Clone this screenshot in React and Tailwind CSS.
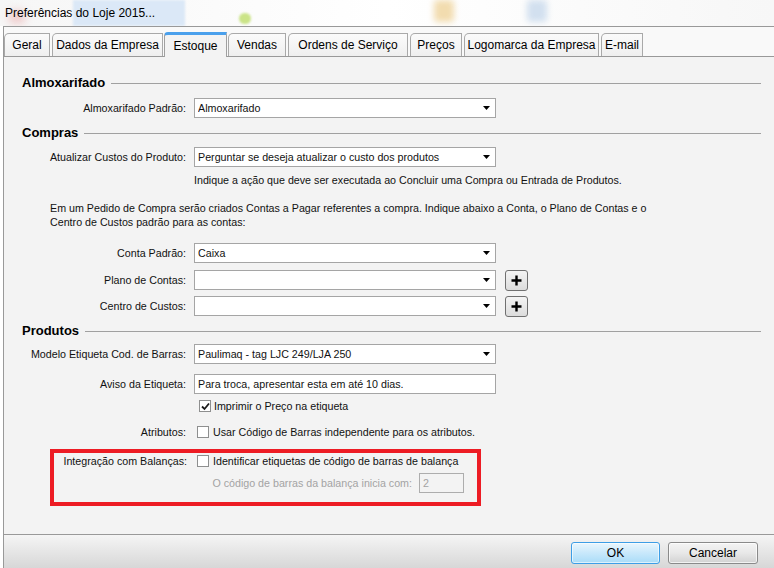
import React from 'react';

const tabs = [
  { label: 'Geral', w: 'w-[46px]' },
  { label: 'Dados da Empresa', w: 'w-[111px]' },
  { label: 'Estoque', w: 'w-[63px]', active: true },
  { label: 'Vendas', w: 'w-[58px]' },
  { label: 'Ordens de Serviço', w: 'w-[120px]' },
  { label: 'Preços', w: 'w-[52px]' },
  { label: 'Logomarca da Empresa', w: 'w-[135px]' },
  { label: 'E-mail', w: 'w-[42px]' },
];

function Arrow() {
  return (
    <svg width="7" height="4" viewBox="0 0 7 4" className="shrink-0">
      <path d="M0 0H7L3.5 4Z" fill="#000" />
    </svg>
  );
}

function Select({ value, w = 'w-[302px]' }) {
  return (
    <div className={`${w} h-[20px] bg-white border border-[#a5a5a5] flex items-center pl-[3px] pr-[5px]`}>
      <span className="flex-1 truncate">{value}</span>
      <Arrow />
    </div>
  );
}

function PlusButton() {
  return (
    <div className="ml-[9px] w-[23px] h-[21px] rounded-[3px] border border-[#707070] bg-gradient-to-b from-[#f4f4f4] to-[#dcdcdc] flex items-center justify-center">
      <svg width="11" height="11" viewBox="0 0 11 11">
        <path d="M5.5 0.5V10.5M0.5 5.5H10.5" stroke="#000" strokeWidth="2.4" />
      </svg>
    </div>
  );
}

function Checkbox({ checked }) {
  return (
    <div className="w-[12px] h-[12px] bg-white border border-[#8e8f8f] flex items-center justify-center shrink-0">
      {checked && (
        <svg width="9" height="9" viewBox="0 0 9 9">
          <path d="M1 4.5L3.5 7L8 1.5" stroke="#1a1a1a" strokeWidth="1.8" fill="none" />
        </svg>
      )}
    </div>
  );
}

function Row({ label, children, className = '' }) {
  return (
    <div className={`flex items-center ${className}`}>
      <span className="w-[183px] text-right pr-[1px]">{label}</span>
      <div className="ml-[7px] flex items-center">{children}</div>
    </div>
  );
}

function Section({ title, className = '' }) {
  return (
    <div className={`flex items-center h-[18px] pl-[18px] pr-[13px] ${className}`}>
      <span className="font-bold text-[13px] text-black">{title}</span>
      <div className="flex-1 ml-[6px] h-px bg-[#a0a0a0]" />
    </div>
  );
}

export default function App() {
  return (
    <div
      className="w-[774px] h-[568px] bg-white relative overflow-hidden text-[10.7px] text-[#111]"
      style={{ fontFamily: '"Liberation Sans", Arial, sans-serif' }}
    >
      {/* title bar with blurred desktop behind */}
      <div className="h-[26px] relative bg-gradient-to-r from-[#f6f6f6] via-white to-[#f7f7f7] overflow-hidden">
        <div className="absolute left-[73px] top-0 w-[112px] h-[26px] bg-[#dbe8f7] blur-[1px]" />
        <div className="absolute left-[8px] top-[10px] w-[18px] h-[14px] rounded-full bg-[#eab0b0] blur-[4px] opacity-60" />
        <div className="absolute left-[239px] top-[13px] w-[12px] h-[11px] rounded-full bg-[#cbe488] blur-[1px]" />
        <div className="absolute left-[434px] top-[0px] w-[20px] h-[22px] rounded bg-[#f2dcaf] blur-[3px]" />
        <div className="absolute left-[527px] top-[0px] w-[20px] h-[22px] rounded bg-[#d2e0ef] blur-[3px]" />
        <span className="absolute left-[5px] top-[4px] text-[12px] text-black">Preferências do Loje 2015...</span>
      </div>

      <div className="ml-[3px] border-t border-l border-[#999999] h-[542px] flex flex-col">
        {/* tabs */}
        <div className="h-[29px] bg-[#f9f9f9] flex items-end gap-[2px] relative z-10">
          {tabs.map((t) =>
            t.active ? (
              <div
                key={t.label}
                className={`${t.w} h-[25px] -mb-px -mx-[1px] bg-[#f3f3f3] border-x border-[#a0a0a0] border-t-[3px] border-t-[#4aa0ec] rounded-tl-[4px] flex items-center justify-center text-[12px] text-black`}
              >
                {t.label}
              </div>
            ) : (
              <div
                key={t.label}
                className={`${t.w} h-[23px] bg-gradient-to-b from-[#fbfbfb] to-[#efefef] border border-b-0 border-[#a9a9a9] rounded-tl-[5px] flex items-center justify-center text-[12px] text-black`}
              >
                {t.label}
              </div>
            )
          )}
        </div>

        {/* panel */}
        <div className="h-[479px] border-t border-b border-[#999999] bg-[#f3f3f3] flex flex-col">
          <Section title="Almoxarifado" className="mt-[17px]" />
          <Row label="Almoxarifado Padrão:" className="mt-[6px] h-[20px]">
            <Select value="Almoxarifado" />
          </Row>

          <Section title="Compras" className="mt-[6px]" />
          <Row label="Atualizar Custos do Produto:" className="mt-[5px] h-[20px]">
            <Select value="Perguntar se deseja atualizar o custo dos produtos" />
          </Row>
          <div className="mt-[5px] h-[16px] flex items-center pl-[190px]">
            Indique a ação que deve ser executada ao Concluir uma Compra ou Entrada de Produtos.
          </div>

          <p className="mt-[13px] pl-[46px] pr-[80px] leading-[14px]">
            Em um Pedido de Compra serão criados Contas a Pagar referentes a compra. Indique abaixo a Conta, o Plano de Contas e o
            <br />
            Centro de Custos padrão para as contas:
          </p>

          <Row label="Conta Padrão:" className="mt-[14px] h-[20px]">
            <Select value="Caixa" />
          </Row>
          <Row label="Plano de Contas:" className="mt-[7px] h-[20px]">
            <Select value="" />
            <PlusButton />
          </Row>
          <Row label="Centro de Custos:" className="mt-[6px] h-[20px]">
            <Select value="" />
            <PlusButton />
          </Row>

          <Section title="Produtos" className="mt-[6px]" />
          <Row label="Modelo Etiqueta Cod. de Barras:" className="mt-[4px] h-[20px]">
            <Select value="Paulimaq - tag LJC 249/LJA 250" />
          </Row>
          <Row label="Aviso da Etiqueta:" className="mt-[10px] h-[20px]">
            <div className="w-[302px] h-[20px] bg-white border border-[#a5a5a5] flex items-center pl-[3px]">
              Para troca, apresentar esta em até 10 dias.
            </div>
          </Row>
          <Row label="" className="mt-[4px] h-[16px]">
            <div className="ml-[5px] flex items-center gap-[3px]">
              <Checkbox checked />
              <span>Imprimir o Preço na etiqueta</span>
            </div>
          </Row>
          <Row label="Atributos:" className="mt-[10px] h-[16px]">
            <div className="ml-[3px] flex items-center gap-[4px]">
              <Checkbox />
              <span>Usar Código de Barras independente para os atributos.</span>
            </div>
          </Row>

          {/* highlighted balance integration */}
          <div className="mt-[9px] ml-[46px] w-[431px] h-[57px] border-4 border-[#ed1c24]">
            <div className="flex items-center h-[16px]">
              <span className="w-[133px] text-right">Integração com Balanças:</span>
              <div className="ml-[10px] flex items-center gap-[4px]">
                <Checkbox />
                <span>Identificar etiquetas de código de barras de balança</span>
              </div>
            </div>
            <div className="mt-[4px] h-[20px] flex items-center justify-end pr-[13px] text-[#a3a3a3]">
              <span>O código de barras da balança inicia com:</span>
              <div className="ml-[7px] w-[45px] h-[20px] border border-[#adadad] bg-[#f3f3f3] flex items-center pl-[3px]">
                2
              </div>
            </div>
          </div>
        </div>

        {/* button bar */}
        <div className="flex-1 bg-gradient-to-b from-[#f5f5f5] to-[#d7d7d7] flex justify-end items-start pt-[7px] pr-[16px] gap-[8px]">
          <div className="w-[89px] h-[22px] rounded-[3px] border border-[#3d9ee6] bg-gradient-to-b from-[#e9f6fd] via-[#c8e8fb] to-[#a9dcf8] flex items-center justify-center text-[12px] text-black shadow-[inset_0_0_0_1px_rgba(255,255,255,0.6)]">
            OK
          </div>
          <div className="w-[90px] h-[22px] rounded-[3px] border border-[#8a8a8a] bg-gradient-to-b from-[#f4f4f4] via-[#e8e8e8] to-[#d2d2d2] flex items-center justify-center text-[12px] text-black shadow-[inset_0_0_0_1px_rgba(255,255,255,0.7)]">
            Cancelar
          </div>
        </div>
      </div>
    </div>
  );
}
